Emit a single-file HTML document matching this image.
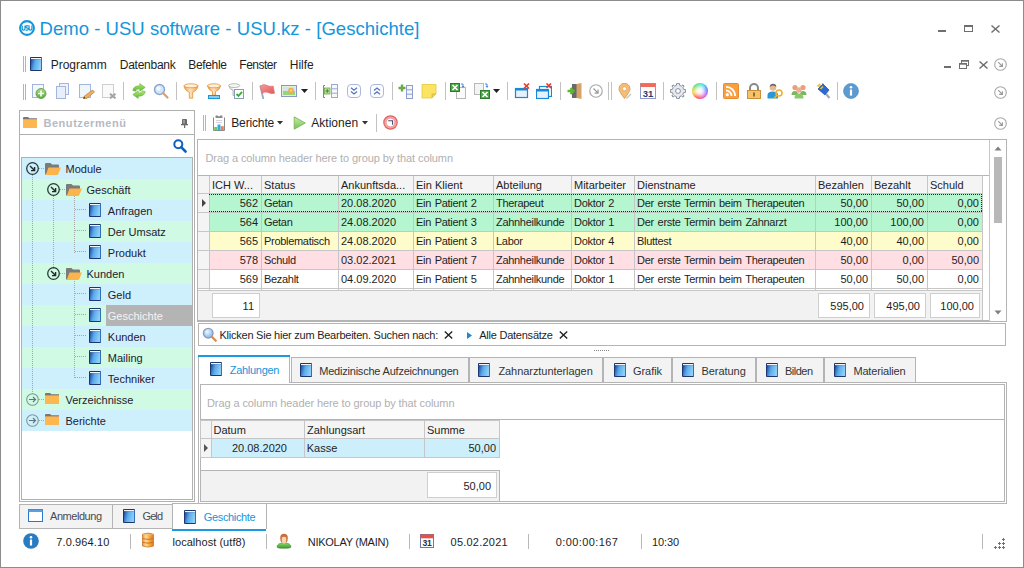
<!DOCTYPE html>
<html><head><meta charset="utf-8">
<style>
*{box-sizing:border-box;margin:0;padding:0}
html,body{width:1024px;height:568px;overflow:hidden;background:#fff}
body{position:relative;font-family:"Liberation Sans",sans-serif;color:#1e1e1e}
.a{position:absolute}
.t{position:absolute;white-space:nowrap;line-height:1}
</style></head><body>
<svg width="0" height="0" style="position:absolute"><defs>
<linearGradient id="bookg" x1="0" y1="0" x2="0" y2="1"><stop offset="0" stop-color="#5aaeea"/><stop offset="1" stop-color="#3d8fd8"/></linearGradient>
<linearGradient id="bookg2" x1="0" y1="0" x2="1" y2="0.25"><stop offset="0" stop-color="#20427e"/><stop offset="0.2" stop-color="#3a74c0"/><stop offset="0.45" stop-color="#5aaaea"/><stop offset="1" stop-color="#8cd0f8"/></linearGradient><linearGradient id="spine" x1="0" y1="0" x2="1" y2="0"><stop offset="0" stop-color="#24407a"/><stop offset="0.5" stop-color="#9ab4dc"/><stop offset="1" stop-color="#3a5a98"/></linearGradient>
<symbol id="book" viewBox="0 0 12 14">
<rect x="0" y="0" width="12" height="14" rx="1" fill="#1b3670"/>
<rect x="1" y="1" width="10.3" height="1.4" fill="#f2f6fc"/>
<rect x="1" y="2.4" width="10.3" height="10.6" fill="url(#bookg2)"/>
<rect x="11.2" y="1" width="0.8" height="12.4" fill="#3470c0"/>
</symbol>
<symbol id="fopen" viewBox="0 0 16 12">
<path d="M0 1 Q0 0 1 0 H5.5 L7 1.5 H13 Q14 1.5 14 2.5 V5 H4 L1.2 11.5 H0 Z" fill="#7b7b7b"/>
<path d="M3.5 4.5 H16 L13.2 11.3 Q13 12 12 12 H0.8 Z" fill="#fbb54c"/>
</symbol>
<symbol id="fclosed" viewBox="0 0 14 11">
<path d="M0 1 Q0 0 1 0 H5 L6.5 1.2 H14 V3 H0 Z" fill="#7b7573"/>
<rect x="0" y="2.4" width="14" height="8.6" fill="#fdb750"/>
</symbol>
<symbol id="cexp" viewBox="0 0 13 13">
<circle cx="6.5" cy="6.5" r="5.8" fill="none" stroke="#2b3a3a" stroke-width="1.3"/>
<path d="M4 4 L8.6 8.6 M8.6 5 V8.6 H5" fill="none" stroke="#1e2a2a" stroke-width="1.4"/>
</symbol>
<symbol id="ccol" viewBox="0 0 13 13">
<circle cx="6.5" cy="6.5" r="5.8" fill="none" stroke="#7e9898" stroke-width="1.1"/>
<path d="M3 6.5 H9.5 M7 4 L9.5 6.5 L7 9" fill="none" stroke="#5e7676" stroke-width="1.1"/>
</symbol>
<symbol id="carr" viewBox="0 0 13 13">
<circle cx="6.5" cy="6.5" r="5.8" fill="none" stroke="#a8a8a8" stroke-width="1.1"/>
<path d="M4.2 4.2 L8.4 8.4 M8.4 5.2 V8.4 H5.2" fill="none" stroke="#989898" stroke-width="1.1"/>
</symbol>
</defs></svg>
<div class="a" style="left:0px;top:0px;width:1024px;height:568px;border:1px solid #8c8c8c"></div>
<svg class="a" style="left:19px;top:20px" width="16" height="16" viewBox="0 0 16 16"><circle cx="8" cy="8" r="6.9" fill="none" stroke="#1296dc" stroke-width="2.1"/><path d="M3.2 5.6 V8.6 Q3.2 10.2 4.6 10.2 Q6 10.2 6 8.6 V5.6 M9.4 6 Q9 5.6 8 5.6 Q6.9 5.6 6.9 6.7 Q6.9 7.7 8 7.9 Q9.3 8.1 9.3 9.1 Q9.3 10.2 8 10.2 Q7 10.2 6.7 9.8 M10.1 5.6 V8.6 Q10.1 10.2 11.5 10.2 Q12.9 10.2 12.9 8.6 V5.6" fill="none" stroke="#1296dc" stroke-width="1.2"/></svg>
<div class="t" style="font-size:18.5px;top:20.34px;color:#1296dc;letter-spacing:0.04px;left:39.5px;">Demo - USU software - USU.kz - [Geschichte]</div>
<div class="a" style="left:938px;top:30px;width:8px;height:2px;background:#6e6e6e"></div>
<div class="a" style="left:964px;top:25px;width:9px;height:7px;border:1px solid #6e6e6e;border-top-width:2px"></div>
<svg class="a" style="left:991px;top:25px" width="9" height="8" viewBox="0 0 9 8"><path d="M0.5 0.5 L8.5 7.5 M8.5 0.5 L0.5 7.5" stroke="#6e6e6e" stroke-width="1.4"/></svg>
<div class="a" style="left:23px;top:56px;width:1px;height:16px;background:#b4b4b4"></div>
<div class="a" style="left:25px;top:56px;width:1px;height:16px;background:#b4b4b4"></div>
<svg class="a" style="left:30px;top:57px" width="12" height="14"><use href="#book" width="12" height="14"/></svg>
<div class="t" style="font-size:12px;top:58.84px;color:#1e1e1e;letter-spacing:-0.001px;left:50.7px;">Programm</div>
<div class="t" style="font-size:12px;top:58.84px;color:#1e1e1e;letter-spacing:-0.256px;left:119.8px;">Datenbank</div>
<div class="t" style="font-size:12px;top:58.84px;color:#1e1e1e;letter-spacing:-0.35px;left:188.3px;">Befehle</div>
<div class="t" style="font-size:12px;top:58.84px;color:#1e1e1e;letter-spacing:-0.497px;left:239.3px;">Fenster</div>
<div class="t" style="font-size:12px;top:58.84px;color:#1e1e1e;letter-spacing:-0.002px;left:289.8px;">Hilfe</div>
<div class="a" style="left:944px;top:66px;width:7px;height:2px;background:#6e6e6e"></div>
<svg class="a" style="left:959px;top:60px" width="10" height="9" viewBox="0 0 10 9"><rect x="2.5" y="0.5" width="7" height="5" fill="none" stroke="#6e6e6e"/><rect x="0.5" y="3.5" width="7" height="5" fill="#fff" stroke="#6e6e6e"/><rect x="0.5" y="3.5" width="7" height="1.2" fill="#6e6e6e"/><rect x="2.5" y="0.5" width="7" height="1.2" fill="#6e6e6e"/></svg>
<svg class="a" style="left:979px;top:61px" width="9" height="8" viewBox="0 0 9 8"><path d="M0.5 0.5 L8.5 7.5 M8.5 0.5 L0.5 7.5" stroke="#6e6e6e" stroke-width="1.4"/></svg>
<svg class="a" style="left:994px;top:58px" width="13" height="13"><use href="#carr" width="13" height="13"/></svg>
<div class="a" style="left:23px;top:84px;width:1px;height:16px;background:#b4b4b4"></div>
<div class="a" style="left:25px;top:84px;width:1px;height:16px;background:#b4b4b4"></div>
<div class="a" style="left:123px;top:82px;width:1px;height:18px;background:#c2c2c2"></div>
<div class="a" style="left:176px;top:82px;width:1px;height:18px;background:#c2c2c2"></div>
<div class="a" style="left:252px;top:82px;width:1px;height:18px;background:#c2c2c2"></div>
<div class="a" style="left:315px;top:82px;width:1px;height:18px;background:#c2c2c2"></div>
<div class="a" style="left:392px;top:82px;width:1px;height:18px;background:#c2c2c2"></div>
<div class="a" style="left:445px;top:82px;width:1px;height:18px;background:#c2c2c2"></div>
<div class="a" style="left:507px;top:82px;width:1px;height:18px;background:#c2c2c2"></div>
<div class="a" style="left:560px;top:82px;width:1px;height:18px;background:#c2c2c2"></div>
<div class="a" style="left:608px;top:82px;width:1px;height:18px;background:#c2c2c2"></div>
<div class="a" style="left:611px;top:82px;width:1px;height:18px;background:#c2c2c2"></div>
<div class="a" style="left:663px;top:82px;width:1px;height:18px;background:#c2c2c2"></div>
<div class="a" style="left:716px;top:82px;width:1px;height:18px;background:#c2c2c2"></div>
<div class="a" style="left:837px;top:82px;width:1px;height:18px;background:#c2c2c2"></div>
<svg class="a" style="left:31px;top:83px" width="16" height="16" viewBox="0 0 16 16"><rect x="1.5" y="1.5" width="11" height="13" fill="#f4f7fc" stroke="#a3b6de"/><defs><linearGradient id="gplus" x1="0" y1="0" x2="0" y2="1"><stop offset="0" stop-color="#a8dc88"/><stop offset="1" stop-color="#5aa83a"/></linearGradient></defs><circle cx="10" cy="10.5" r="5" fill="url(#gplus)" stroke="#62a246" stroke-width="0.9"/><path d="M10 7.6 V13.4 M7.1 10.5 H12.9" stroke="#fff" stroke-width="1.6"/></svg>
<svg class="a" style="left:55px;top:83px" width="16" height="16" viewBox="0 0 16 16"><rect x="4.5" y="0.5" width="9" height="11" fill="#eef2fb" stroke="#a3b6de"/><rect x="1.5" y="3.5" width="9" height="12" fill="#e8eefa" stroke="#a3b6de"/></svg>
<svg class="a" style="left:79px;top:83px" width="16" height="16" viewBox="0 0 16 16"><rect x="0.5" y="1.5" width="11" height="13" fill="#f0f4fb" stroke="#a3b6de"/><path d="M13.5 7 L15.5 9 L7 16 L4.5 16 L5 13.5 Z" fill="#f0b060" stroke="#b07a30" stroke-width="0.7"/><path d="M4.5 16 L5 13.5 L6.5 15 Z" fill="#444"/></svg>
<svg class="a" style="left:102px;top:83px" width="16" height="16" viewBox="0 0 16 16"><rect x="0.5" y="1.5" width="11" height="13" fill="#fafafa" stroke="#cfcfcf"/><path d="M8 10.8 L13.5 15.3 M13.5 10.8 L8 15.3" stroke="#a4a4a4" stroke-width="2.1"/></svg>
<svg class="a" style="left:131px;top:83px" width="16" height="16" viewBox="0 0 16 16"><defs><linearGradient id="rg" x1="0" y1="0" x2="0" y2="1"><stop offset="0" stop-color="#b4e878"/><stop offset="1" stop-color="#5cb82c"/></linearGradient></defs><path d="M1.8 7.5 Q2.5 2.6 8.8 2.8 V0.6 L14.2 4.4 L8.8 8.2 V5.9 Q5.2 5.6 4.6 8.2 Z" fill="url(#rg)" stroke="#6ab63a" stroke-width="0.6"/><path d="M14.2 8.5 Q13.5 13.4 7.2 13.2 V15.4 L1.8 11.6 L7.2 7.8 V10.1 Q10.8 10.4 11.4 7.8 Z" fill="url(#rg)" stroke="#6ab63a" stroke-width="0.6"/></svg>
<svg class="a" style="left:153px;top:83px" width="16" height="16" viewBox="0 0 16 16"><circle cx="6.5" cy="6.5" r="5" fill="#cfe6fb" stroke="#8aa6cc" stroke-width="1.4"/><circle cx="5.5" cy="5.5" r="2.2" fill="#fff" opacity="0.7"/><path d="M10 10 L14.5 14.5" stroke="#d8a070" stroke-width="2.2" stroke-linecap="round"/></svg>
<svg class="a" style="left:183px;top:83px" width="16" height="16" viewBox="0 0 16 16"><defs><linearGradient id="fg" x1="0" y1="0" x2="1" y2="0"><stop offset="0" stop-color="#f0a050"/><stop offset="0.45" stop-color="#fde2b8"/><stop offset="1" stop-color="#f0a050"/></linearGradient></defs><path d="M1 2.8 Q1.5 7.2 6.3 9.2 V15.2 H9.7 V9.2 Q14.5 7.2 15 2.8 Z" fill="url(#fg)" stroke="#e0923c" stroke-width="0.8"/><ellipse cx="8" cy="2.8" rx="7" ry="2" fill="#fff2dc" stroke="#e0923c" stroke-width="0.8"/></svg>
<svg class="a" style="left:206px;top:83px" width="16" height="16" viewBox="0 0 16 16"><path d="M1.5 2.8 Q2 6.8 6.5 8.6 V12 H9.5 V8.6 Q14 6.8 14.5 2.8 Z" fill="url(#fg)" stroke="#e0923c" stroke-width="0.8"/><ellipse cx="8" cy="2.8" rx="6.5" ry="2" fill="#fff2dc" stroke="#e0923c" stroke-width="0.8"/><rect x="2.5" y="12.5" width="11" height="3" fill="#8ccbec" stroke="#1d96d8"/></svg>
<svg class="a" style="left:228px;top:83px" width="16" height="16" viewBox="0 0 16 16"><path d="M0.8 2.6 Q1.3 6 5 7.6 V12.5 H7.5 V7.6" fill="#e4e4e4" stroke="#a8a8a8" stroke-width="0.8"/><ellipse cx="6.2" cy="2.6" rx="5.6" ry="1.9" fill="#f6f6f6" stroke="#a8a8a8" stroke-width="0.8"/><rect x="6.5" y="6.5" width="9" height="9" fill="#fff" stroke="#8a9ab8"/><path d="M8.5 11 L10.5 13 L14 8.8" fill="none" stroke="#3aaa3a" stroke-width="1.8"/></svg>
<svg class="a" style="left:259px;top:83px" width="16" height="16" viewBox="0 0 16 16"><defs><linearGradient id="flg" x1="0" y1="0" x2="1" y2="1"><stop offset="0" stop-color="#f49a9a"/><stop offset="1" stop-color="#e05a5a"/></linearGradient></defs><path d="M4.2 15.5 L1.5 3.5" stroke="#98acc4" stroke-width="1.8" stroke-linecap="round"/><path d="M1.2 3 Q4.5 0.5 7.8 2.2 Q11 4 14.2 3 L15.6 10.2 Q12.2 11.4 9 9.6 Q6 8 3 10.5 Z" fill="url(#flg)" stroke="#e06a6a" stroke-width="0.5"/></svg>
<svg class="a" style="left:281px;top:83px" width="16" height="16" viewBox="0 0 16 16"><rect x="0.5" y="2.5" width="15" height="11" fill="#e2efd8" stroke="#8898c8"/><rect x="2" y="4" width="12" height="8" fill="#9cd27a"/><rect x="2" y="4" width="12" height="4" fill="#cfe6f0"/><circle cx="10" cy="7.5" r="2.8" fill="#f6a848"/><circle cx="10" cy="7.5" r="1.2" fill="#f8d870"/></svg>
<svg class="a" style="left:301px;top:89px" width="7" height="4" viewBox="0 0 7 4"><path d="M0 0 H7 L3.5 4 Z" fill="#222"/></svg>
<svg class="a" style="left:322px;top:83px" width="16" height="16" viewBox="0 0 16 16"><path d="M3 2.5 H1.5 V14.5 H3" stroke="#777" stroke-width="0.9" fill="none"/><rect x="2.5" y="5" width="5.5" height="6" fill="#b8e09a" stroke="#6aaa48" stroke-width="0.8"/><path d="M5.25 6.2 V9.8 M3.5 8 H7" stroke="#3a7a2a" stroke-width="0.9"/><rect x="9.5" y="1.5" width="6" height="13" fill="#f6f8fc" stroke="#9aa8d4"/><path d="M9.5 5.8 H15.5 M9.5 10.2 H15.5" stroke="#9aa8d4"/></svg>
<svg class="a" style="left:346px;top:83px" width="16" height="16" viewBox="0 0 16 16"><rect x="1.5" y="1.5" width="13" height="13" rx="3.5" fill="#fbfcfe" stroke="#aabadf"/><path d="M5 4.8 L8 7.3 L11 4.8 M5 8.5 L8 11 L11 8.5" fill="none" stroke="#5a72bc" stroke-width="1.2"/></svg>
<svg class="a" style="left:369px;top:83px" width="16" height="16" viewBox="0 0 16 16"><rect x="1.5" y="1.5" width="13" height="13" rx="3.5" fill="#fbfcfe" stroke="#aabadf"/><path d="M5 7.5 L8 5 L11 7.5 M5 11.2 L8 8.7 L11 11.2" fill="none" stroke="#5a72bc" stroke-width="1.2"/></svg>
<svg class="a" style="left:398px;top:83px" width="16" height="16" viewBox="0 0 16 16"><path d="M4 1.5 V8.5 M0.5 5 H7.5" stroke="#6aaa4a" stroke-width="2.4"/><rect x="8.5" y="2.5" width="6" height="13" fill="#f4f6fb" stroke="#8f9ed0"/><path d="M8.5 6.8 H14.5 M8.5 11.2 H14.5" stroke="#8f9ed0"/></svg>
<svg class="a" style="left:421px;top:83px" width="16" height="16" viewBox="0 0 16 16"><path d="M1 1.5 H15 V11 L11 15 H1 Z" fill="#fbe462" stroke="#e8c83a" stroke-width="0.8"/><path d="M15 11 H11 V15" fill="#f0d24a" stroke="#d0b030" stroke-width="0.6"/></svg>
<svg class="a" style="left:450px;top:83px" width="16" height="16" viewBox="0 0 16 16"><rect x="6.5" y="4.5" width="9" height="11" fill="#fafafa" stroke="#b8b8b8"/><rect x="0.5" y="0.5" width="9" height="8" fill="#4ea84a" stroke="#2f7a2f"/><path d="M2.5 2 L7.5 7 M7.5 2 L2.5 7" stroke="#fff" stroke-width="1.5"/><path d="M11 1 H13 V4" fill="none" stroke="#4a88d8" stroke-width="1"/><path d="M11.5 3 L13 5 L14.5 3 Z" fill="#4a88d8"/></svg>
<svg class="a" style="left:474px;top:83px" width="16" height="16" viewBox="0 0 16 16"><rect x="0.5" y="0.5" width="9" height="11" fill="#f4f4f4" stroke="#b8b8b8"/><rect x="6.5" y="7.5" width="9" height="8" fill="#4ea84a" stroke="#2f7a2f"/><path d="M8.5 9 L13.5 14 M13.5 9 L8.5 14" stroke="#fff" stroke-width="1.5"/><path d="M11 1 H13 V4" fill="none" stroke="#4a88d8" stroke-width="1"/><path d="M11.5 3 L13 5 L14.5 3 Z" fill="#4a88d8"/></svg>
<svg class="a" style="left:493px;top:89px" width="7" height="4" viewBox="0 0 7 4"><path d="M0 0 H7 L3.5 4 Z" fill="#222"/></svg>
<svg class="a" style="left:514px;top:83px" width="16" height="16" viewBox="0 0 16 16"><rect x="1.5" y="5.5" width="12" height="9" fill="#e6f2fb" stroke="#1a88d8" stroke-width="1.2"/><rect x="1.5" y="5.5" width="12" height="2" fill="#1a88d8"/><path d="M10 0.5 L15 5.5 M15 0.5 L10 5.5" stroke="#e83a2a" stroke-width="1.6"/></svg>
<svg class="a" style="left:536px;top:83px" width="16" height="16" viewBox="0 0 16 16"><rect x="3.5" y="3.5" width="12" height="10" fill="#fff" stroke="#1a88d8" stroke-width="1.2"/><rect x="0.5" y="6.5" width="12" height="9" fill="#e6f2fb" stroke="#1a88d8" stroke-width="1.2"/><rect x="0.5" y="6.5" width="12" height="2" fill="#1a88d8"/><path d="M10.5 0.5 L15 5 M15 0.5 L10.5 5" stroke="#e83a2a" stroke-width="1.6"/></svg>
<svg class="a" style="left:567px;top:83px" width="16" height="16" viewBox="0 0 16 16"><rect x="5" y="1" width="9" height="14" fill="#6a6a6a"/><path d="M9.5 1 L14.5 0 V16 L9.5 15 Z" fill="#d6a468"/><path d="M0.5 8 H6 M3.5 5 L6.5 8 L3.5 11" stroke="#5ab82a" stroke-width="2.4" fill="none"/></svg>
<svg class="a" style="left:589px;top:84px" width="14" height="14"><use href="#carr" width="14" height="14"/></svg>
<svg class="a" style="left:617px;top:83px" width="16" height="16" viewBox="0 0 16 16"><path d="M9.5 15.5 L14 11" stroke="#9a9a9a" stroke-width="1.2" opacity="0.6"/><path d="M7.5 15.5 Q2 8.5 2 5.8 A5.5 5.5 0 0 1 13 5.8 Q13 8.5 7.5 15.5 Z" fill="#f4be78" stroke="#d49040" stroke-width="0.8"/><circle cx="7.5" cy="5.8" r="2" fill="#fff" stroke="#d49040" stroke-width="0.5"/></svg>
<svg class="a" style="left:640px;top:83px" width="16" height="16" viewBox="0 0 16 16"><rect x="0.5" y="0.5" width="15" height="15" fill="#fff" stroke="#8c9ccc"/><rect x="0.5" y="0.5" width="15" height="3.5" fill="#f26a5a"/><text x="8" y="14" font-size="9.5" font-weight="bold" text-anchor="middle" fill="#2c3c70" font-family="Liberation Sans">31</text></svg>
<svg class="a" style="left:670px;top:83px" width="16" height="16" viewBox="0 0 16 16"><g transform="translate(8 8)"><path d="M-1.3 -7.6 H1.3 L1.7 -5.6 L3.3 -4.9 L5 -6.1 L6.1 -5 L4.9 -3.3 L5.6 -1.7 L7.6 -1.3 V1.3 L5.6 1.7 L4.9 3.3 L6.1 5 L5 6.1 L3.3 4.9 L1.7 5.6 L1.3 7.6 H-1.3 L-1.7 5.6 L-3.3 4.9 L-5 6.1 L-6.1 5 L-4.9 3.3 L-5.6 1.7 L-7.6 1.3 V-1.3 L-5.6 -1.7 L-4.9 -3.3 L-6.1 -5 L-5 -6.1 L-3.3 -4.9 L-1.7 -5.6 Z" fill="#e6e9f0" stroke="#7a8294" stroke-width="0.9"/><circle r="2.4" fill="#fff" stroke="#7a8294" stroke-width="0.9"/></g></svg>
<div class="a" style="left:692px;top:83px;width:16px;height:16px;border-radius:50%;background:radial-gradient(circle,#fff 0,rgba(255,255,255,0.85) 25%,rgba(255,255,255,0) 70%),conic-gradient(from 200deg,#ff4a4a,#ffd040,#60e060,#40e0e0,#5a7aff,#e050e0,#ff4a4a)"></div>
<svg class="a" style="left:723px;top:83px" width="16" height="16" viewBox="0 0 16 16"><rect x="0.5" y="0.5" width="15" height="15" rx="1" fill="#f8a040" stroke="#e88a30"/><circle cx="4.3" cy="11.7" r="1.6" fill="#fff"/><path d="M3 7.5 A5.5 5.5 0 0 1 8.5 13 M3 3.8 A9.2 9.2 0 0 1 12.2 13" fill="none" stroke="#fff" stroke-width="1.8"/></svg>
<svg class="a" style="left:746px;top:83px" width="16" height="16" viewBox="0 0 16 16"><path d="M4 8 V5 A4 4 0 0 1 12 5 V8" fill="none" stroke="#8a8a8a" stroke-width="2"/><rect x="1.5" y="7.5" width="13" height="8" fill="#f6c26a" stroke="#c8903a"/><rect x="7.3" y="9.5" width="1.4" height="4" fill="#6a4a1a"/></svg>
<svg class="a" style="left:767px;top:83px" width="16" height="16" viewBox="0 0 16 16"><circle cx="6" cy="4.5" r="3.3" fill="#e8b890"/><path d="M2.7 4 Q3 0.8 6 0.8 Q9.3 0.8 9.3 4 Q8 2.5 6 2.5 Q4 2.5 2.7 4 Z" fill="#6a6a6a"/><path d="M0.5 15.5 V12 Q0.5 8.5 6 8.5 Q10 8.5 11 11 V15.5 Z" fill="#2a98d8"/><circle cx="12" cy="10" r="3" fill="none" stroke="#f0b030" stroke-width="1.6"/><path d="M10 12 L7 15.5" stroke="#f0b030" stroke-width="1.6"/></svg>
<svg class="a" style="left:791px;top:83px" width="16" height="16" viewBox="0 0 16 16"><circle cx="4" cy="4.5" r="2.6" fill="#e8a07a"/><circle cx="12" cy="4.5" r="2.6" fill="#e8a07a"/><path d="M0.5 12 Q0.5 8 4 8 Q7 8 7 12 Z" fill="#7ab860"/><path d="M9 12 Q9 8 12 8 Q15.5 8 15.5 12 Z" fill="#7ab860"/><circle cx="8" cy="7" r="2.8" fill="#f0b090"/><path d="M3.5 15.5 Q3.5 10.5 8 10.5 Q12.5 10.5 12.5 15.5 Z" fill="#8ac870"/></svg>
<svg class="a" style="left:815px;top:83px" width="16" height="16" viewBox="0 0 16 16"><path d="M4 4 L6 2 M7 1 L9 -1" stroke="#f0c020" stroke-width="1.4"/><path d="M3 6 L8 1 L14 7 L10 12 Z" fill="#2a6ad8" stroke="#1a4aa8" stroke-width="0.7"/><path d="M2.5 3.5 L5 1 M5.5 6 L8 3.5" stroke="#f0c020" stroke-width="1.6"/><path d="M11 11 L14.5 15" stroke="#9aa8b8" stroke-width="2"/></svg>
<svg class="a" style="left:843px;top:83px" width="16" height="16" viewBox="0 0 16 16"><circle cx="8" cy="8" r="7.5" fill="#5c9ad0" stroke="#4a88c0" stroke-width="0.6"/><circle cx="8" cy="4.3" r="1.3" fill="#fff"/><rect x="6.9" y="6.6" width="2.2" height="6" fill="#fff"/></svg>
<svg class="a" style="left:994px;top:86px" width="13" height="13"><use href="#carr" width="13" height="13"/></svg>
<div class="a" style="left:19px;top:110px;width:176px;height:392px;border:1px solid #b0b0b0;background:#fff"></div>
<div class="a" style="left:20px;top:134px;width:174px;height:1px;background:#b0b0b0"></div>
<div class="a" style="left:21px;top:157px;width:172px;height:343px;border:1px solid #b0b0b0"></div>
<svg class="a" style="left:23px;top:117px" width="14" height="11" viewBox="0 0 14 11"><path d="M0 1 Q0 0 1 0 H5 L6.5 1.2 H14 V3 H0 Z" fill="#7b7573"/><rect x="0" y="2.2" width="14" height="8.8" fill="#fdb750"/></svg>
<div class="t" style="font-size:11px;top:117.69px;color:#b4bac4;letter-spacing:0.564px;font-weight:bold;left:43.4px;">Benutzermenü</div>
<svg class="a" style="left:180px;top:119px" width="9" height="9" viewBox="0 0 9 9"><path d="M2.5 0.5 H6.5 V5 H2.5 Z" fill="#9a9a9a" stroke="#6a6a6a" stroke-width="1"/><rect x="5" y="1" width="1" height="4" fill="#6a6a6a"/><rect x="1" y="5" width="7" height="1.3" fill="#6a6a6a"/><rect x="4" y="6" width="1.2" height="3" fill="#6a6a6a"/></svg>
<svg class="a" style="left:173px;top:139px" width="14" height="14" viewBox="0 0 14 14"><circle cx="5.3" cy="5.3" r="4" fill="none" stroke="#1060c0" stroke-width="2"/><path d="M8.2 8.2 L12.5 12.5" stroke="#1060c0" stroke-width="2.6" stroke-linecap="round"/></svg>
<div class="a" style="left:22px;top:158px;width:170px;height:21px;background:#cef0fd"></div>
<div class="a" style="left:22px;top:179px;width:170px;height:21px;background:#d0fae4"></div>
<div class="a" style="left:22px;top:200px;width:170px;height:21px;background:#cef0fd"></div>
<div class="a" style="left:22px;top:221px;width:170px;height:21px;background:#d0fae4"></div>
<div class="a" style="left:22px;top:242px;width:170px;height:21px;background:#cef0fd"></div>
<div class="a" style="left:22px;top:263px;width:170px;height:21px;background:#d0fae4"></div>
<div class="a" style="left:22px;top:284px;width:170px;height:21px;background:#cef0fd"></div>
<div class="a" style="left:22px;top:305px;width:170px;height:21px;background:#d0fae4"></div>
<div class="a" style="left:22px;top:326px;width:170px;height:21px;background:#cef0fd"></div>
<div class="a" style="left:22px;top:347px;width:170px;height:21px;background:#d0fae4"></div>
<div class="a" style="left:22px;top:368px;width:170px;height:21px;background:#cef0fd"></div>
<div class="a" style="left:22px;top:389px;width:170px;height:21px;background:#d0fae4"></div>
<div class="a" style="left:22px;top:410px;width:170px;height:21px;background:#cef0fd"></div>
<div class="a" style="left:32px;top:175px;width:1px;height:220px;background:repeating-linear-gradient(to bottom,#a0a8a8 0 1px,transparent 1px 2px)"></div>
<div class="a" style="left:53px;top:196px;width:1px;height:74px;background:repeating-linear-gradient(to bottom,#a0a8a8 0 1px,transparent 1px 2px)"></div>
<div class="a" style="left:74px;top:196px;width:1px;height:57px;background:repeating-linear-gradient(to bottom,#a0a8a8 0 1px,transparent 1px 2px)"></div>
<div class="a" style="left:74px;top:281px;width:1px;height:98px;background:repeating-linear-gradient(to bottom,#a0a8a8 0 1px,transparent 1px 2px)"></div>
<div class="a" style="left:39px;top:168px;width:6px;height:1px;background:repeating-linear-gradient(to right,#a0a8a8 0 1px,transparent 1px 2px)"></div>
<svg class="a" style="left:26px;top:162px" width="13" height="13"><use href="#cexp" width="13" height="13"/></svg>
<svg class="a" style="left:45px;top:163px" width="16" height="12"><use href="#fopen" width="16" height="12"/></svg>
<div class="t" style="font-size:11px;top:163.69px;color:#1e2030;left:65.5px;">Module</div>
<div class="a" style="left:60px;top:189px;width:6px;height:1px;background:repeating-linear-gradient(to right,#a0a8a8 0 1px,transparent 1px 2px)"></div>
<svg class="a" style="left:47px;top:183px" width="13" height="13"><use href="#cexp" width="13" height="13"/></svg>
<svg class="a" style="left:66px;top:184px" width="16" height="12"><use href="#fopen" width="16" height="12"/></svg>
<div class="t" style="font-size:11px;top:184.69px;color:#1e2030;left:86.5px;">Geschäft</div>
<div class="a" style="left:75px;top:209px;width:12px;height:1px;background:repeating-linear-gradient(to right,#a0a8a8 0 1px,transparent 1px 2px)"></div>
<svg class="a" style="left:89px;top:203px" width="12" height="14"><use href="#book" width="12" height="14"/></svg>
<div class="t" style="font-size:11px;top:205.69px;color:#1e2030;left:107.8px;">Anfragen</div>
<div class="a" style="left:75px;top:230px;width:12px;height:1px;background:repeating-linear-gradient(to right,#a0a8a8 0 1px,transparent 1px 2px)"></div>
<svg class="a" style="left:89px;top:224px" width="12" height="14"><use href="#book" width="12" height="14"/></svg>
<div class="t" style="font-size:11px;top:226.69px;color:#1e2030;left:107.8px;">Der Umsatz</div>
<div class="a" style="left:75px;top:251px;width:12px;height:1px;background:repeating-linear-gradient(to right,#a0a8a8 0 1px,transparent 1px 2px)"></div>
<svg class="a" style="left:89px;top:245px" width="12" height="14"><use href="#book" width="12" height="14"/></svg>
<div class="t" style="font-size:11px;top:247.69px;color:#1e2030;left:107.8px;">Produkt</div>
<div class="a" style="left:60px;top:273px;width:6px;height:1px;background:repeating-linear-gradient(to right,#a0a8a8 0 1px,transparent 1px 2px)"></div>
<svg class="a" style="left:47px;top:267px" width="13" height="13"><use href="#cexp" width="13" height="13"/></svg>
<svg class="a" style="left:66px;top:268px" width="16" height="12"><use href="#fopen" width="16" height="12"/></svg>
<div class="t" style="font-size:11px;top:268.69px;color:#1e2030;left:86.5px;">Kunden</div>
<div class="a" style="left:75px;top:293px;width:12px;height:1px;background:repeating-linear-gradient(to right,#a0a8a8 0 1px,transparent 1px 2px)"></div>
<svg class="a" style="left:89px;top:287px" width="12" height="14"><use href="#book" width="12" height="14"/></svg>
<div class="t" style="font-size:11px;top:289.69px;color:#1e2030;left:107.8px;">Geld</div>
<div class="a" style="left:75px;top:314px;width:12px;height:1px;background:repeating-linear-gradient(to right,#a0a8a8 0 1px,transparent 1px 2px)"></div>
<div class="a" style="left:106px;top:305px;width:86px;height:21px;background:#b4b4b4"></div>
<svg class="a" style="left:89px;top:308px" width="12" height="14"><use href="#book" width="12" height="14"/></svg>
<div class="t" style="font-size:11px;top:310.69px;color:#f4f4f4;left:107.8px;">Geschichte</div>
<div class="a" style="left:75px;top:335px;width:12px;height:1px;background:repeating-linear-gradient(to right,#a0a8a8 0 1px,transparent 1px 2px)"></div>
<svg class="a" style="left:89px;top:329px" width="12" height="14"><use href="#book" width="12" height="14"/></svg>
<div class="t" style="font-size:11px;top:331.69px;color:#1e2030;left:107.8px;">Kunden</div>
<div class="a" style="left:75px;top:356px;width:12px;height:1px;background:repeating-linear-gradient(to right,#a0a8a8 0 1px,transparent 1px 2px)"></div>
<svg class="a" style="left:89px;top:350px" width="12" height="14"><use href="#book" width="12" height="14"/></svg>
<div class="t" style="font-size:11px;top:352.69px;color:#1e2030;left:107.8px;">Mailing</div>
<div class="a" style="left:75px;top:377px;width:12px;height:1px;background:repeating-linear-gradient(to right,#a0a8a8 0 1px,transparent 1px 2px)"></div>
<svg class="a" style="left:89px;top:371px" width="12" height="14"><use href="#book" width="12" height="14"/></svg>
<div class="t" style="font-size:11px;top:373.69px;color:#1e2030;left:107.8px;">Techniker</div>
<div class="a" style="left:39px;top:399px;width:6px;height:1px;background:repeating-linear-gradient(to right,#a0a8a8 0 1px,transparent 1px 2px)"></div>
<svg class="a" style="left:26px;top:393px" width="13" height="13"><use href="#ccol" width="13" height="13"/></svg>
<svg class="a" style="left:45px;top:393px" width="14" height="11"><use href="#fclosed" width="14" height="11"/></svg>
<div class="t" style="font-size:11px;top:394.69px;color:#1e2030;left:65.5px;">Verzeichnisse</div>
<div class="a" style="left:39px;top:420px;width:6px;height:1px;background:repeating-linear-gradient(to right,#a0a8a8 0 1px,transparent 1px 2px)"></div>
<svg class="a" style="left:26px;top:414px" width="13" height="13"><use href="#ccol" width="13" height="13"/></svg>
<svg class="a" style="left:45px;top:414px" width="14" height="11"><use href="#fclosed" width="14" height="11"/></svg>
<div class="t" style="font-size:11px;top:415.69px;color:#1e2030;left:65.5px;">Berichte</div>
<div class="a" style="left:203px;top:115px;width:1px;height:16px;background:#b4b4b4"></div>
<div class="a" style="left:205px;top:115px;width:1px;height:16px;background:#b4b4b4"></div>
<svg class="a" style="left:212px;top:115px" width="14" height="16" viewBox="0 0 14 16"><path d="M1.5 2.5 V15.5 H12.5 V2.5" fill="#fff" stroke="#8a8a8a" stroke-width="1"/><rect x="3.5" y="0.5" width="7" height="2.5" rx="0.5" fill="#8a8a8a"/><rect x="6" y="0" width="2" height="1.2" fill="#fff"/><path d="M4 5.5 H10 M4 7.5 H10" stroke="#c8b8c8" stroke-width="0.7"/><rect x="2.2" y="12" width="3" height="3.2" fill="#6ac85a"/><rect x="5.5" y="9.5" width="3" height="5.7" fill="#1ab8e0"/><rect x="8.8" y="11.2" width="3" height="4" fill="#f07a5a"/></svg>
<div class="t" style="font-size:12px;top:117.34px;color:#1e1e1e;letter-spacing:-0.146px;left:231.25px;">Berichte</div>
<svg class="a" style="left:277px;top:121px" width="6" height="4" viewBox="0 0 6 4"><path d="M0 0 H6 L3 3.5 Z" fill="#333"/></svg>
<svg class="a" style="left:293px;top:116px" width="13" height="14" viewBox="0 0 13 14"><defs><linearGradient id="pg" x1="0" y1="0" x2="0" y2="1"><stop offset="0" stop-color="#c8ecb0"/><stop offset="1" stop-color="#78c050"/></linearGradient></defs><path d="M1.2 0.8 L12.3 7 L1.2 13.2 Z" fill="url(#pg)" stroke="#7ab85a" stroke-width="0.9"/></svg>
<div class="t" style="font-size:12px;top:117.34px;color:#1e1e1e;letter-spacing:0.043px;left:311.2px;">Aktionen</div>
<svg class="a" style="left:362px;top:121px" width="6" height="4" viewBox="0 0 6 4"><path d="M0 0 H6 L3 3.5 Z" fill="#333"/></svg>
<div class="a" style="left:376px;top:114px;width:1px;height:18px;background:#c2c2c2"></div>
<svg class="a" style="left:383px;top:115px" width="15" height="15" viewBox="0 0 15 15"><circle cx="7.5" cy="7.5" r="6.7" fill="#f4a4a4" stroke="#e26464" stroke-width="1.2"/><circle cx="7.5" cy="7.5" r="4.3" fill="#fff" stroke="#e88080" stroke-width="0.6"/><path d="M5.2 5.8 H9.6 V9.8" fill="none" stroke="#4a4a7a" stroke-width="1.1"/></svg>
<svg class="a" style="left:994px;top:117px" width="13" height="13"><use href="#carr" width="13" height="13"/></svg>
<div class="a" style="left:197px;top:139px;width:810px;height:183px;border:1px solid #b4b4b4;background:#fff"></div>
<div class="t" style="font-size:11px;top:153.49px;color:#b0b0b0;letter-spacing:-0.092px;left:205.5px;">Drag a column header here to group by that column</div>
<div class="a" style="left:989px;top:140px;width:1px;height:181px;background:#c6c6c6"></div>
<svg class="a" style="left:994px;top:146px" width="8" height="5" viewBox="0 0 8 5"><path d="M0.5 4.5 L4 0.5 L7.5 4.5 Z" fill="#808080"/></svg>
<div class="a" style="left:994px;top:157px;width:8px;height:66px;background:#b8b8b8"></div>
<svg class="a" style="left:994px;top:310px" width="8" height="5" viewBox="0 0 8 5"><path d="M0.5 0.5 L4 4.5 L7.5 0.5 Z" fill="#808080"/></svg>
<div class="a" style="left:198px;top:175px;width:791px;height:1px;background:#b4b4b4"></div>
<div class="a" style="left:198px;top:176px;width:784px;height:17px;background:#f4f4f4"></div>
<div class="a" style="left:198px;top:193px;width:784px;height:1px;background:#c6c6c6"></div>
<div class="a" style="left:209px;top:176px;width:1px;height:112px;background:#c6c6c6"></div>
<div class="a" style="left:261px;top:176px;width:1px;height:112px;background:#c6c6c6"></div>
<div class="a" style="left:338px;top:176px;width:1px;height:112px;background:#c6c6c6"></div>
<div class="a" style="left:413px;top:176px;width:1px;height:112px;background:#c6c6c6"></div>
<div class="a" style="left:493px;top:176px;width:1px;height:112px;background:#c6c6c6"></div>
<div class="a" style="left:571px;top:176px;width:1px;height:112px;background:#c6c6c6"></div>
<div class="a" style="left:634px;top:176px;width:1px;height:112px;background:#c6c6c6"></div>
<div class="a" style="left:815px;top:176px;width:1px;height:112px;background:#c6c6c6"></div>
<div class="a" style="left:871px;top:176px;width:1px;height:112px;background:#c6c6c6"></div>
<div class="a" style="left:927px;top:176px;width:1px;height:112px;background:#c6c6c6"></div>
<div class="a" style="left:982px;top:176px;width:1px;height:112px;background:#c6c6c6"></div>
<div class="a" style="left:982px;top:175px;width:1px;height:114px;background:#c6c6c6"></div>
<div class="a" style="left:198px;top:194px;width:11px;height:95px;background:#f4f4f4"></div>
<div class="a" style="left:209px;top:194px;width:773px;height:18px;background:#b5f5cf"></div>
<div class="a" style="left:198px;top:212px;width:784px;height:1px;background:#c6c6c6"></div>
<div class="a" style="left:209px;top:213px;width:773px;height:18px;background:#b5f5cf"></div>
<div class="a" style="left:198px;top:231px;width:784px;height:1px;background:#c6c6c6"></div>
<div class="a" style="left:209px;top:232px;width:773px;height:18px;background:#fffccc"></div>
<div class="a" style="left:198px;top:250px;width:784px;height:1px;background:#c6c6c6"></div>
<div class="a" style="left:209px;top:251px;width:773px;height:18px;background:#ffdfe3"></div>
<div class="a" style="left:198px;top:269px;width:784px;height:1px;background:#c6c6c6"></div>
<div class="a" style="left:209px;top:270px;width:773px;height:18px;background:#ffffff"></div>
<div class="a" style="left:198px;top:288px;width:784px;height:1px;background:#c6c6c6"></div>
<div class="a" style="left:209px;top:176px;width:1px;height:114px;background:#c6c6c6"></div>
<div class="a" style="left:261px;top:176px;width:1px;height:114px;background:#c6c6c6"></div>
<div class="a" style="left:338px;top:176px;width:1px;height:114px;background:#c6c6c6"></div>
<div class="a" style="left:413px;top:176px;width:1px;height:114px;background:#c6c6c6"></div>
<div class="a" style="left:493px;top:176px;width:1px;height:114px;background:#c6c6c6"></div>
<div class="a" style="left:571px;top:176px;width:1px;height:114px;background:#c6c6c6"></div>
<div class="a" style="left:634px;top:176px;width:1px;height:114px;background:#c6c6c6"></div>
<div class="a" style="left:815px;top:176px;width:1px;height:114px;background:#c6c6c6"></div>
<div class="a" style="left:871px;top:176px;width:1px;height:114px;background:#c6c6c6"></div>
<div class="a" style="left:927px;top:176px;width:1px;height:114px;background:#c6c6c6"></div>
<div class="a" style="left:982px;top:176px;width:1px;height:114px;background:#c6c6c6"></div>
<div class="t" style="font-size:11px;top:179.69px;color:#1e1e1e;left:212px;">ICH W...</div>
<div class="t" style="font-size:11px;top:179.69px;color:#1e1e1e;left:264px;">Status</div>
<div class="t" style="font-size:11px;top:179.69px;color:#1e1e1e;left:341px;">Ankunftsda...</div>
<div class="t" style="font-size:11px;top:179.69px;color:#1e1e1e;left:416px;">Ein Klient</div>
<div class="t" style="font-size:11px;top:179.69px;color:#1e1e1e;left:496px;">Abteilung</div>
<div class="t" style="font-size:11px;top:179.69px;color:#1e1e1e;left:574px;">Mitarbeiter</div>
<div class="t" style="font-size:11px;top:179.69px;color:#1e1e1e;left:637px;">Dienstname</div>
<div class="t" style="font-size:11px;top:179.69px;color:#1e1e1e;left:818px;">Bezahlen</div>
<div class="t" style="font-size:11px;top:179.69px;color:#1e1e1e;left:874px;">Bezahlt</div>
<div class="t" style="font-size:11px;top:179.69px;color:#1e1e1e;left:930px;">Schuld</div>
<div class="t" style="font-size:11px;top:197.69px;color:#1e1e1e;right:766px;">562</div>
<div class="t" style="font-size:11px;top:197.69px;color:#1e1e1e;left:264px;letter-spacing:-0.3px;word-spacing:1px;">Getan</div>
<div class="t" style="font-size:11px;top:197.69px;color:#1e1e1e;left:341px;">20.08.2020</div>
<div class="t" style="font-size:11px;top:197.69px;color:#1e1e1e;left:416px;letter-spacing:-0.3px;word-spacing:1px;">Ein Patient 2</div>
<div class="t" style="font-size:11px;top:197.69px;color:#1e1e1e;left:496px;letter-spacing:-0.3px;word-spacing:1px;">Therapeut</div>
<div class="t" style="font-size:11px;top:197.69px;color:#1e1e1e;left:574px;letter-spacing:-0.3px;word-spacing:1px;">Doktor 2</div>
<div class="t" style="font-size:11px;top:197.69px;color:#1e1e1e;left:637px;letter-spacing:-0.3px;word-spacing:1px;">Der erste Termin beim Therapeuten</div>
<div class="t" style="font-size:11px;top:197.69px;color:#1e1e1e;right:156px;">50,00</div>
<div class="t" style="font-size:11px;top:197.69px;color:#1e1e1e;right:100px;">50,00</div>
<div class="t" style="font-size:11px;top:197.69px;color:#1e1e1e;right:45px;">0,00</div>
<div class="t" style="font-size:11px;top:216.69px;color:#1e1e1e;right:766px;">564</div>
<div class="t" style="font-size:11px;top:216.69px;color:#1e1e1e;left:264px;letter-spacing:-0.3px;word-spacing:1px;">Getan</div>
<div class="t" style="font-size:11px;top:216.69px;color:#1e1e1e;left:341px;">24.08.2020</div>
<div class="t" style="font-size:11px;top:216.69px;color:#1e1e1e;left:416px;letter-spacing:-0.3px;word-spacing:1px;">Ein Patient 3</div>
<div class="t" style="font-size:11px;top:216.69px;color:#1e1e1e;left:496px;letter-spacing:-0.3px;word-spacing:1px;">Zahnheilkunde</div>
<div class="t" style="font-size:11px;top:216.69px;color:#1e1e1e;left:574px;letter-spacing:-0.3px;word-spacing:1px;">Doktor 1</div>
<div class="t" style="font-size:11px;top:216.69px;color:#1e1e1e;left:637px;letter-spacing:-0.3px;word-spacing:1px;">Der erste Termin beim Zahnarzt</div>
<div class="t" style="font-size:11px;top:216.69px;color:#1e1e1e;right:156px;">100,00</div>
<div class="t" style="font-size:11px;top:216.69px;color:#1e1e1e;right:100px;">100,00</div>
<div class="t" style="font-size:11px;top:216.69px;color:#1e1e1e;right:45px;">0,00</div>
<div class="t" style="font-size:11px;top:235.69px;color:#1e1e1e;right:766px;">565</div>
<div class="t" style="font-size:11px;top:235.69px;color:#1e1e1e;left:264px;letter-spacing:-0.3px;word-spacing:1px;">Problematisch</div>
<div class="t" style="font-size:11px;top:235.69px;color:#1e1e1e;left:341px;">24.08.2020</div>
<div class="t" style="font-size:11px;top:235.69px;color:#1e1e1e;left:416px;letter-spacing:-0.3px;word-spacing:1px;">Ein Patient 3</div>
<div class="t" style="font-size:11px;top:235.69px;color:#1e1e1e;left:496px;letter-spacing:-0.3px;word-spacing:1px;">Labor</div>
<div class="t" style="font-size:11px;top:235.69px;color:#1e1e1e;left:574px;letter-spacing:-0.3px;word-spacing:1px;">Doktor 4</div>
<div class="t" style="font-size:11px;top:235.69px;color:#1e1e1e;left:637px;letter-spacing:-0.3px;word-spacing:1px;">Bluttest</div>
<div class="t" style="font-size:11px;top:235.69px;color:#1e1e1e;right:156px;">40,00</div>
<div class="t" style="font-size:11px;top:235.69px;color:#1e1e1e;right:100px;">40,00</div>
<div class="t" style="font-size:11px;top:235.69px;color:#1e1e1e;right:45px;">0,00</div>
<div class="t" style="font-size:11px;top:254.69px;color:#1e1e1e;right:766px;">578</div>
<div class="t" style="font-size:11px;top:254.69px;color:#1e1e1e;left:264px;letter-spacing:-0.3px;word-spacing:1px;">Schuld</div>
<div class="t" style="font-size:11px;top:254.69px;color:#1e1e1e;left:341px;">03.02.2021</div>
<div class="t" style="font-size:11px;top:254.69px;color:#1e1e1e;left:416px;letter-spacing:-0.3px;word-spacing:1px;">Ein Patient 7</div>
<div class="t" style="font-size:11px;top:254.69px;color:#1e1e1e;left:496px;letter-spacing:-0.3px;word-spacing:1px;">Zahnheilkunde</div>
<div class="t" style="font-size:11px;top:254.69px;color:#1e1e1e;left:574px;letter-spacing:-0.3px;word-spacing:1px;">Doktor 1</div>
<div class="t" style="font-size:11px;top:254.69px;color:#1e1e1e;left:637px;letter-spacing:-0.3px;word-spacing:1px;">Der erste Termin beim Therapeuten</div>
<div class="t" style="font-size:11px;top:254.69px;color:#1e1e1e;right:156px;">50,00</div>
<div class="t" style="font-size:11px;top:254.69px;color:#1e1e1e;right:100px;">0,00</div>
<div class="t" style="font-size:11px;top:254.69px;color:#1e1e1e;right:45px;">50,00</div>
<div class="t" style="font-size:11px;top:273.69px;color:#1e1e1e;right:766px;">569</div>
<div class="t" style="font-size:11px;top:273.69px;color:#1e1e1e;left:264px;letter-spacing:-0.3px;word-spacing:1px;">Bezahlt</div>
<div class="t" style="font-size:11px;top:273.69px;color:#1e1e1e;left:341px;">04.09.2020</div>
<div class="t" style="font-size:11px;top:273.69px;color:#1e1e1e;left:416px;letter-spacing:-0.3px;word-spacing:1px;">Ein Patient 5</div>
<div class="t" style="font-size:11px;top:273.69px;color:#1e1e1e;left:496px;letter-spacing:-0.3px;word-spacing:1px;">Zahnheilkunde</div>
<div class="t" style="font-size:11px;top:273.69px;color:#1e1e1e;left:574px;letter-spacing:-0.3px;word-spacing:1px;">Doktor 1</div>
<div class="t" style="font-size:11px;top:273.69px;color:#1e1e1e;left:637px;letter-spacing:-0.3px;word-spacing:1px;">Der erste Termin beim Therapeuten</div>
<div class="t" style="font-size:11px;top:273.69px;color:#1e1e1e;right:156px;">50,00</div>
<div class="t" style="font-size:11px;top:273.69px;color:#1e1e1e;right:100px;">50,00</div>
<div class="t" style="font-size:11px;top:273.69px;color:#1e1e1e;right:45px;">0,00</div>
<div class="a" style="left:209px;top:194px;width:773px;height:1px;background:repeating-linear-gradient(to right,#222 0 1px,transparent 1px 2px)"></div>
<div class="a" style="left:209px;top:211px;width:773px;height:1px;background:repeating-linear-gradient(to right,#222 0 1px,transparent 1px 2px)"></div>
<div class="a" style="left:981px;top:194px;width:1px;height:18px;background:repeating-linear-gradient(to bottom,#222 0 1px,transparent 1px 2px)"></div>
<svg class="a" style="left:202px;top:199px" width="4" height="8" viewBox="0 0 4 8"><path d="M0 0 L4 4 L0 8 Z" fill="#444"/></svg>
<div class="a" style="left:198px;top:290px;width:784px;height:1px;background:#c6c6c6"></div>
<div class="a" style="left:198px;top:291px;width:784px;height:29px;background:#f2f2f2"></div>
<div class="a" style="left:982px;top:175px;width:1px;height:146px;background:#c6c6c6"></div>
<div class="a" style="left:198px;top:320px;width:791px;height:1px;background:#b4b4b4"></div>
<div class="a" style="left:212px;top:293px;width:48px;height:25px;background:#fff;border:1px solid #cfcfcf"></div>
<div class="t" style="font-size:11px;top:300.69px;color:#1e1e1e;right:770px;">11</div>
<div class="a" style="left:818px;top:293px;width:52px;height:25px;background:#fff;border:1px solid #cfcfcf"></div>
<div class="t" style="font-size:11px;top:300.69px;color:#1e1e1e;right:160px;">595,00</div>
<div class="a" style="left:874px;top:293px;width:52px;height:25px;background:#fff;border:1px solid #cfcfcf"></div>
<div class="t" style="font-size:11px;top:300.69px;color:#1e1e1e;right:104px;">495,00</div>
<div class="a" style="left:930px;top:293px;width:50px;height:25px;background:#fff;border:1px solid #cfcfcf"></div>
<div class="t" style="font-size:11px;top:300.69px;color:#1e1e1e;right:50px;">100,00</div>
<div class="a" style="left:198px;top:323px;width:808px;height:23px;border:1px solid #b4b4b4;background:#fff"></div>
<svg class="a" style="left:202px;top:327px" width="16" height="16" viewBox="0 0 16 16"><defs><radialGradient id="lens" cx="0.4" cy="0.35" r="0.7"><stop offset="0" stop-color="#f0f8ff"/><stop offset="1" stop-color="#7ab4e8"/></radialGradient></defs><circle cx="6.2" cy="6.2" r="4.8" fill="url(#lens)" stroke="#8a9cc0" stroke-width="1.4"/><path d="M9.8 9.8 L13.8 13.8" stroke="#d88a50" stroke-width="2.2" stroke-linecap="round"/></svg>
<div class="t" style="font-size:11px;top:330.19px;color:#1e1e1e;letter-spacing:-0.241px;left:219.5px;">Klicken Sie hier zum Bearbeiten. Suchen nach:</div>
<svg class="a" style="left:444px;top:331px" width="9" height="8" viewBox="0 0 9 8"><path d="M0.8 0.6 L8.2 7.4 M8.2 0.6 L0.8 7.4" stroke="#222" stroke-width="1.4"/></svg>
<svg class="a" style="left:467px;top:332px" width="5" height="7" viewBox="0 0 5 7"><path d="M0 0 L5 3.5 L0 7 Z" fill="#1a8ad8"/></svg>
<div class="t" style="font-size:11px;top:330.19px;color:#1e1e1e;letter-spacing:-0.232px;left:479.2px;">Alle Datensätze</div>
<svg class="a" style="left:559px;top:331px" width="9" height="8" viewBox="0 0 9 8"><path d="M0.8 0.6 L8.2 7.4 M8.2 0.6 L0.8 7.4" stroke="#222" stroke-width="1.4"/></svg>
<div class="a" style="left:594px;top:350px;width:16px;height:1px;background:repeating-linear-gradient(to right,#888 0 1px,transparent 1px 2px)"></div>
<div class="a" style="left:198px;top:382px;width:809px;height:122px;border:1px solid #b4b4b4;background:#fff"></div>
<div class="a" style="left:200px;top:384px;width:805px;height:118px;border:1px solid #b4b4b4;background:#fff"></div>
<div class="a" style="left:198px;top:355px;width:92px;height:28px;background:#fff;border-left:1px solid #b4b4b4;border-right:1px solid #b4b4b4"></div>
<div class="a" style="left:198px;top:355px;width:92px;height:2px;background:#1a9ae0"></div>
<svg class="a" style="left:210px;top:362px" width="12" height="14"><use href="#book" width="12" height="14"/></svg>
<div class="t" style="font-size:11px;top:364.69px;color:#1596dc;letter-spacing:-0.298px;left:229.8px;">Zahlungen</div>
<div class="a" style="left:291px;top:357px;width:178px;height:25px;background:#f3f3f3;border:1px solid #b4b4b4;border-bottom:none"></div>
<svg class="a" style="left:300px;top:363px" width="12" height="14"><use href="#book" width="12" height="14"/></svg>
<div class="t" style="font-size:11px;top:365.69px;color:#333;letter-spacing:-0.209px;left:319.2px;">Medizinische Aufzeichnungen</div>
<div class="a" style="left:469px;top:357px;width:134px;height:25px;background:#f3f3f3;border:1px solid #b4b4b4;border-bottom:none"></div>
<svg class="a" style="left:478px;top:363px" width="12" height="14"><use href="#book" width="12" height="14"/></svg>
<div class="t" style="font-size:11px;top:365.69px;color:#333;letter-spacing:-0.059px;left:498.4px;">Zahnarztunterlagen</div>
<div class="a" style="left:603px;top:357px;width:69px;height:25px;background:#f3f3f3;border:1px solid #b4b4b4;border-bottom:none"></div>
<svg class="a" style="left:614px;top:363px" width="12" height="14"><use href="#book" width="12" height="14"/></svg>
<div class="t" style="font-size:11px;top:365.69px;color:#333;letter-spacing:-0.067px;left:633px;">Grafik</div>
<div class="a" style="left:672px;top:357px;width:84px;height:25px;background:#f3f3f3;border:1px solid #b4b4b4;border-bottom:none"></div>
<svg class="a" style="left:682px;top:363px" width="12" height="14"><use href="#book" width="12" height="14"/></svg>
<div class="t" style="font-size:11px;top:365.69px;color:#333;letter-spacing:-0.035px;left:701.4px;">Beratung</div>
<div class="a" style="left:756px;top:357px;width:68px;height:25px;background:#f3f3f3;border:1px solid #b4b4b4;border-bottom:none"></div>
<svg class="a" style="left:766px;top:363px" width="12" height="14"><use href="#book" width="12" height="14"/></svg>
<div class="t" style="font-size:11px;top:365.69px;color:#333;letter-spacing:-0.516px;left:785px;">Bilden</div>
<div class="a" style="left:824px;top:357px;width:92px;height:25px;background:#f3f3f3;border:1px solid #b4b4b4;border-bottom:none"></div>
<svg class="a" style="left:834px;top:363px" width="12" height="14"><use href="#book" width="12" height="14"/></svg>
<div class="t" style="font-size:11px;top:365.69px;color:#333;letter-spacing:-0.16px;left:853.4px;">Materialien</div>
<div class="a" style="left:199px;top:382px;width:90px;height:2px;background:#fff"></div>
<div class="t" style="font-size:11px;top:397.99px;color:#b0b0b0;letter-spacing:-0.092px;left:207px;">Drag a column header here to group by that column</div>
<div class="a" style="left:201px;top:419px;width:803px;height:1px;background:#b4b4b4"></div>
<div class="a" style="left:200px;top:420px;width:300px;height:18px;background:#f4f4f4"></div>
<div class="a" style="left:200px;top:438px;width:300px;height:1px;background:#c6c6c6"></div>
<div class="a" style="left:200px;top:439px;width:11px;height:18px;background:#f4f4f4"></div>
<div class="a" style="left:211px;top:439px;width:288px;height:18px;background:#cdeffb"></div>
<div class="a" style="left:200px;top:457px;width:300px;height:1px;background:#c6c6c6"></div>
<div class="a" style="left:200px;top:420px;width:1px;height:38px;background:#c6c6c6"></div>
<div class="a" style="left:211px;top:420px;width:1px;height:38px;background:#c6c6c6"></div>
<div class="a" style="left:304px;top:420px;width:1px;height:38px;background:#c6c6c6"></div>
<div class="a" style="left:424px;top:420px;width:1px;height:38px;background:#c6c6c6"></div>
<div class="a" style="left:499px;top:420px;width:1px;height:38px;background:#c6c6c6"></div>
<div class="a" style="left:200px;top:420px;width:300px;height:1px;background:#c6c6c6"></div>
<div class="t" style="font-size:11px;top:425.19px;color:#1e1e1e;left:213.5px;">Datum</div>
<div class="t" style="font-size:11px;top:425.19px;color:#1e1e1e;left:307px;">Zahlungsart</div>
<div class="t" style="font-size:11px;top:425.19px;color:#1e1e1e;left:427px;">Summe</div>
<svg class="a" style="left:204px;top:444px" width="4" height="8" viewBox="0 0 4 8"><path d="M0 0 L4 4 L0 8 Z" fill="#555"/></svg>
<div class="t" style="font-size:11px;top:442.69px;color:#1e1e1e;right:737px;">20.08.2020</div>
<div class="t" style="font-size:11px;top:442.69px;color:#1e1e1e;left:306.7px;">Kasse</div>
<div class="t" style="font-size:11px;top:442.69px;color:#1e1e1e;right:528px;">50,00</div>
<div class="a" style="left:201px;top:470px;width:299px;height:31px;background:#f2f2f2;border-top:1px solid #b4b4b4;border-right:1px solid #b4b4b4"></div>
<div class="a" style="left:427px;top:472px;width:70px;height:26px;background:#fff;border:1px solid #cfcfcf"></div>
<div class="t" style="font-size:11px;top:480.69px;color:#1e1e1e;right:533px;">50,00</div>
<div class="a" style="left:19px;top:503px;width:247px;height:1px;background:#fff"></div>
<div class="a" style="left:19px;top:504px;width:94px;height:25px;background:#f3f3f3;border:1px solid #b4b4b4"></div>
<div class="t" style="font-size:11px;top:510.69px;color:#4a4a50;letter-spacing:-0.456px;left:50px;">Anmeldung</div>
<div class="a" style="left:112px;top:504px;width:61px;height:25px;background:#f3f3f3;border:1px solid #b4b4b4"></div>
<div class="t" style="font-size:11px;top:510.69px;color:#4a4a50;letter-spacing:-0.912px;left:142.5px;">Geld</div>
<div class="a" style="left:172px;top:503px;width:95px;height:26px;background:#fff;border:1px solid #b4b4b4;border-bottom:none"></div>
<div class="a" style="left:172px;top:529px;width:94px;height:2px;background:#1a9ae0"></div>
<div class="t" style="font-size:11px;top:511.69px;color:#1596dc;letter-spacing:-0.348px;left:203.75px;">Geschichte</div>
<svg class="a" style="left:28px;top:509px" width="15" height="13" viewBox="0 0 15 13"><rect x="0.5" y="0.5" width="14" height="12" fill="#fff" stroke="#2a78c8"/><rect x="0.5" y="0.5" width="14" height="2.5" fill="#5aa0e0"/></svg>
<svg class="a" style="left:123px;top:509px" width="12" height="14"><use href="#book" width="12" height="14"/></svg>
<svg class="a" style="left:184px;top:510px" width="12" height="14"><use href="#book" width="12" height="14"/></svg>
<svg class="a" style="left:23px;top:533px" width="16" height="16" viewBox="0 0 16 16"><circle cx="8" cy="8" r="7.8" fill="#2a7cc0"/><circle cx="8" cy="4.3" r="1.3" fill="#fff"/><rect x="6.9" y="6.5" width="2.2" height="6" fill="#fff"/></svg>
<div class="t" style="font-size:11px;top:536.69px;color:#1e1e1e;letter-spacing:0.112px;left:56.25px;">7.0.964.10</div>
<div class="t" style="font-size:11px;top:536.69px;color:#1e1e1e;letter-spacing:0.044px;left:172.5px;">localhost (utf8)</div>
<div class="t" style="font-size:11px;top:536.69px;color:#1e1e1e;letter-spacing:-0.273px;left:307.8px;">NIKOLAY (MAIN)</div>
<div class="t" style="font-size:11px;top:536.69px;color:#1e1e1e;letter-spacing:0.216px;left:450.6px;">05.02.2021</div>
<div class="t" style="font-size:11px;top:536.69px;color:#1e1e1e;letter-spacing:0.389px;left:555.8px;">0:00:00:167</div>
<div class="t" style="font-size:11px;top:536.69px;color:#1e1e1e;letter-spacing:-0.132px;left:652px;">10:30</div>
<div class="a" style="left:130px;top:534px;width:1px;height:15px;background:#b8b8b8"></div>
<div class="a" style="left:266px;top:534px;width:1px;height:15px;background:#b8b8b8"></div>
<div class="a" style="left:409px;top:534px;width:1px;height:15px;background:#b8b8b8"></div>
<div class="a" style="left:528px;top:534px;width:1px;height:15px;background:#b8b8b8"></div>
<div class="a" style="left:641px;top:534px;width:1px;height:15px;background:#b8b8b8"></div>
<div class="a" style="left:982px;top:534px;width:1px;height:15px;background:#b8b8b8"></div>
<svg class="a" style="left:142px;top:532px" width="12" height="16" viewBox="0 0 12 16"><defs><linearGradient id="dbg" x1="0" y1="0" x2="1" y2="0"><stop offset="0" stop-color="#e89038"/><stop offset="0.3" stop-color="#ffe0a0"/><stop offset="0.6" stop-color="#f8b040"/><stop offset="1" stop-color="#e07818"/></linearGradient></defs><path d="M0.5 2.2 Q6 0 11.5 2.2 V14 Q6 16.2 0.5 14 Z" fill="url(#dbg)" stroke="#c87a30" stroke-width="0.8"/><path d="M0.8 6.6 Q6 8.2 11.2 6.6 M0.8 10.4 Q6 12 11.2 10.4" fill="none" stroke="#c86a20" stroke-width="0.9"/><path d="M1 2.4 Q6 4.2 11 2.4" fill="none" stroke="#f0c080" stroke-width="0.8"/></svg>
<svg class="a" style="left:276px;top:533px" width="16" height="16" viewBox="0 0 16 16"><defs><linearGradient id="bodyg" x1="0" y1="0" x2="0" y2="1"><stop offset="0" stop-color="#8ad86a"/><stop offset="1" stop-color="#3a9a2a"/></linearGradient></defs><path d="M1 14 Q1 10 8 10 Q15 10 15 14 Q15 15.3 8 15.3 Q1 15.3 1 14 Z" fill="url(#bodyg)" stroke="#4a8a3a" stroke-width="0.6"/><path d="M4.2 5 Q4.2 0.8 8 0.8 Q11.8 0.8 11.8 5 Q11.8 8 10.5 9.5 H5.5 Q4.2 8 4.2 5 Z" fill="#c8703a"/><path d="M5.8 4.5 Q8 3.2 10.2 4.5 V8 Q10 10.8 8 10.8 Q6 10.8 5.8 8 Z" fill="#f8d4b0"/></svg>
<svg class="a" style="left:420px;top:534px" width="14" height="14" viewBox="0 0 14 14"><rect x="0.5" y="0.5" width="13" height="13" fill="#fff" stroke="#6a7ab0"/><rect x="0.5" y="0.5" width="13" height="3.8" fill="#ea5040"/><text x="7" y="12.3" font-size="8.6" font-weight="bold" text-anchor="middle" fill="#283048" font-family="Liberation Sans" letter-spacing="-0.3">31</text></svg>
<svg class="a" style="left:1002px;top:538px" width="3" height="3" viewBox="0 0 3 3"><path d="M1.5 0 V3 M0 1.5 H3" stroke="#707070" stroke-width="1"/></svg>
<svg class="a" style="left:998px;top:542px" width="3" height="3" viewBox="0 0 3 3"><path d="M1.5 0 V3 M0 1.5 H3" stroke="#707070" stroke-width="1"/></svg>
<svg class="a" style="left:1002px;top:542px" width="3" height="3" viewBox="0 0 3 3"><path d="M1.5 0 V3 M0 1.5 H3" stroke="#707070" stroke-width="1"/></svg>
<svg class="a" style="left:994px;top:546px" width="3" height="3" viewBox="0 0 3 3"><path d="M1.5 0 V3 M0 1.5 H3" stroke="#707070" stroke-width="1"/></svg>
<svg class="a" style="left:998px;top:546px" width="3" height="3" viewBox="0 0 3 3"><path d="M1.5 0 V3 M0 1.5 H3" stroke="#707070" stroke-width="1"/></svg>
<svg class="a" style="left:1002px;top:546px" width="3" height="3" viewBox="0 0 3 3"><path d="M1.5 0 V3 M0 1.5 H3" stroke="#707070" stroke-width="1"/></svg>
</body></html>
